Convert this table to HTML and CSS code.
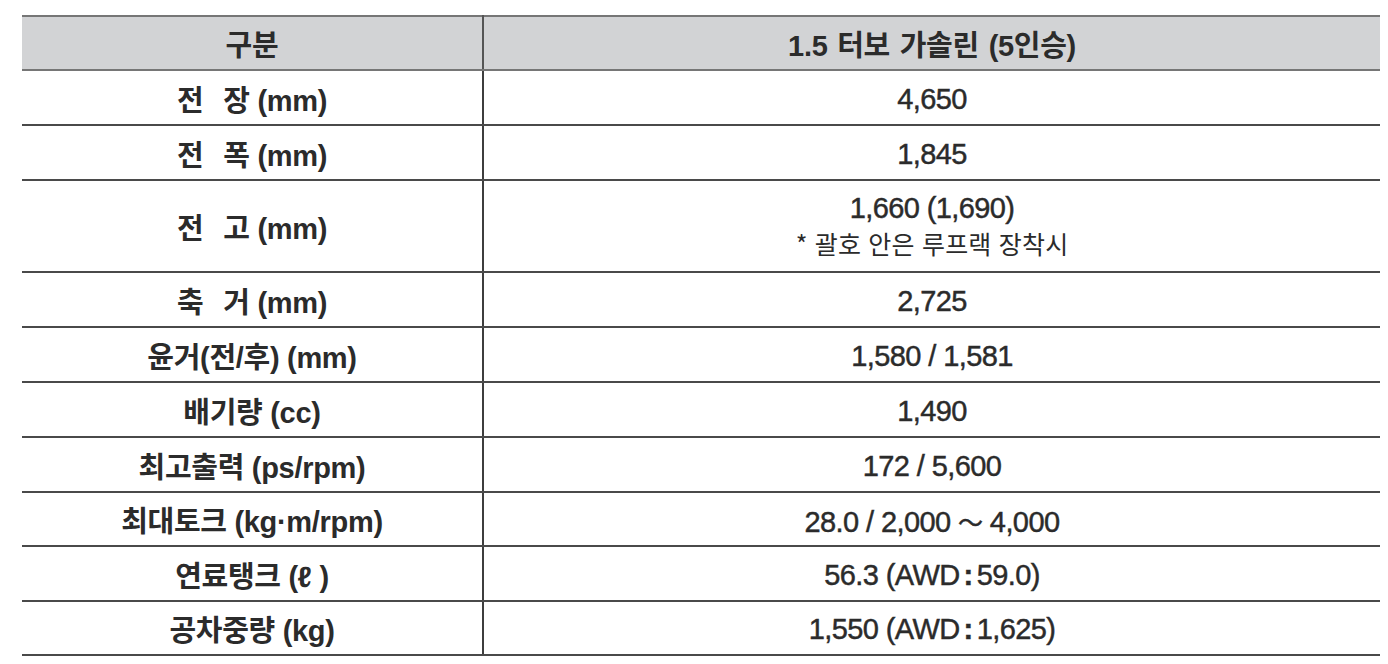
FILE: index.html
```html
<!DOCTYPE html>
<html lang="ko">
<head>
<meta charset="utf-8">
<link rel="stylesheet" href="styles.css">
</head>
<body>
<table class="spec">
  <thead>
    <tr class="head">
      <th class="label">구분</th>
      <th class="value">1.5 터보 가솔린 (5인승)</th>
    </tr>
  </thead>
  <tbody>
    <tr><td class="label">전<span class="gap"></span>장 (mm)</td><td class="value">4,650</td></tr>
    <tr><td class="label">전<span class="gap"></span>폭 (mm)</td><td class="value">1,845</td></tr>
    <tr class="tall"><td class="label">전<span class="gap"></span>고 (mm)</td><td class="value"><div>1,660 (1,690)</div><div class="note">* 괄호 안은 루프랙 장착시</div></td></tr>
    <tr><td class="label">축<span class="gap"></span>거 (mm)</td><td class="value">2,725</td></tr>
    <tr><td class="label">윤거(전/후) (mm)</td><td class="value">1,580 / 1,581</td></tr>
    <tr><td class="label">배기량 (cc)</td><td class="value">1,490</td></tr>
    <tr><td class="label">최고출력 (ps/rpm)</td><td class="value">172 / 5,600</td></tr>
    <tr class="short"><td class="label">최대토크 (kg·m/rpm)</td><td class="value">28.0 / 2,000 <span class="tilde">～</span> 4,000</td></tr>
    <tr><td class="label">연료탱크 (ℓ )</td><td class="value">56.3 (AWD<span class="colon">:</span>59.0)</td></tr>
    <tr class="short"><td class="label">공차중량 (kg)</td><td class="value">1,550 (AWD<span class="colon">:</span>1,625)</td></tr>
  </tbody>
</table>
</body>
</html>
```

FILE: styles.css
```css
html, body {
  margin: 0;
  padding: 0;
  background: #ffffff;
}

body {
  font-family: "Liberation Sans", "Noto Sans CJK KR", sans-serif;
  color: #2b2b2b;
}

.spec {
  margin: 15px 0 0 22px;
  width: 1358px;
  border-collapse: collapse;
  table-layout: fixed;
}

.spec th,
.spec td {
  padding: 0;
  text-align: center;
  vertical-align: middle;
  font-size: 29px;
  letter-spacing: -0.6px;
  height: 53px;
  border-bottom: 2px solid #4a4a4a;
}

.spec tr.short td {
  height: 52px;
}

.spec .label {
  width: 460px;
  font-weight: 700;
  letter-spacing: -0.3px;
  border-right: 2px solid #3e3e3e;
}

.spec .value {
  font-weight: 400;
  -webkit-text-stroke: 0.45px #2b2b2b;
}

.spec tbody td.value {
  padding-top: 3px;
  height: 50px;
}

.spec tbody tr.short td.value {
  height: 49px;
}

.spec thead th {
  background: #d2d3d5;
  border-top: 2px solid #767676;
  border-bottom: 2px solid #767676;
  height: 52px;
}

.spec thead th.value {
  font-weight: 700;
  -webkit-text-stroke: 0;
  letter-spacing: -0.3px;
  word-spacing: 2px;
}

.spec thead th.label {
  border-right: 2px solid #555;
}

.spec tr.tall td {
  height: 90px;
}

.spec tbody tr.tall td.value {
  padding-top: 0;
  height: 90px;
}

.gap {
  display: inline-block;
  width: 20px;
}

.note {
  font-family: "Noto Sans CJK KR", sans-serif;
  font-size: 25px;
  font-weight: 400;
  letter-spacing: 0.2px;
  margin-top: 0;
  -webkit-text-stroke: 0;
}

.tilde {
  font-family: "Noto Sans CJK KR", sans-serif;
  font-size: 25px;
}

.colon {
  font-weight: 700;
  padding: 0 4px;
}
```
